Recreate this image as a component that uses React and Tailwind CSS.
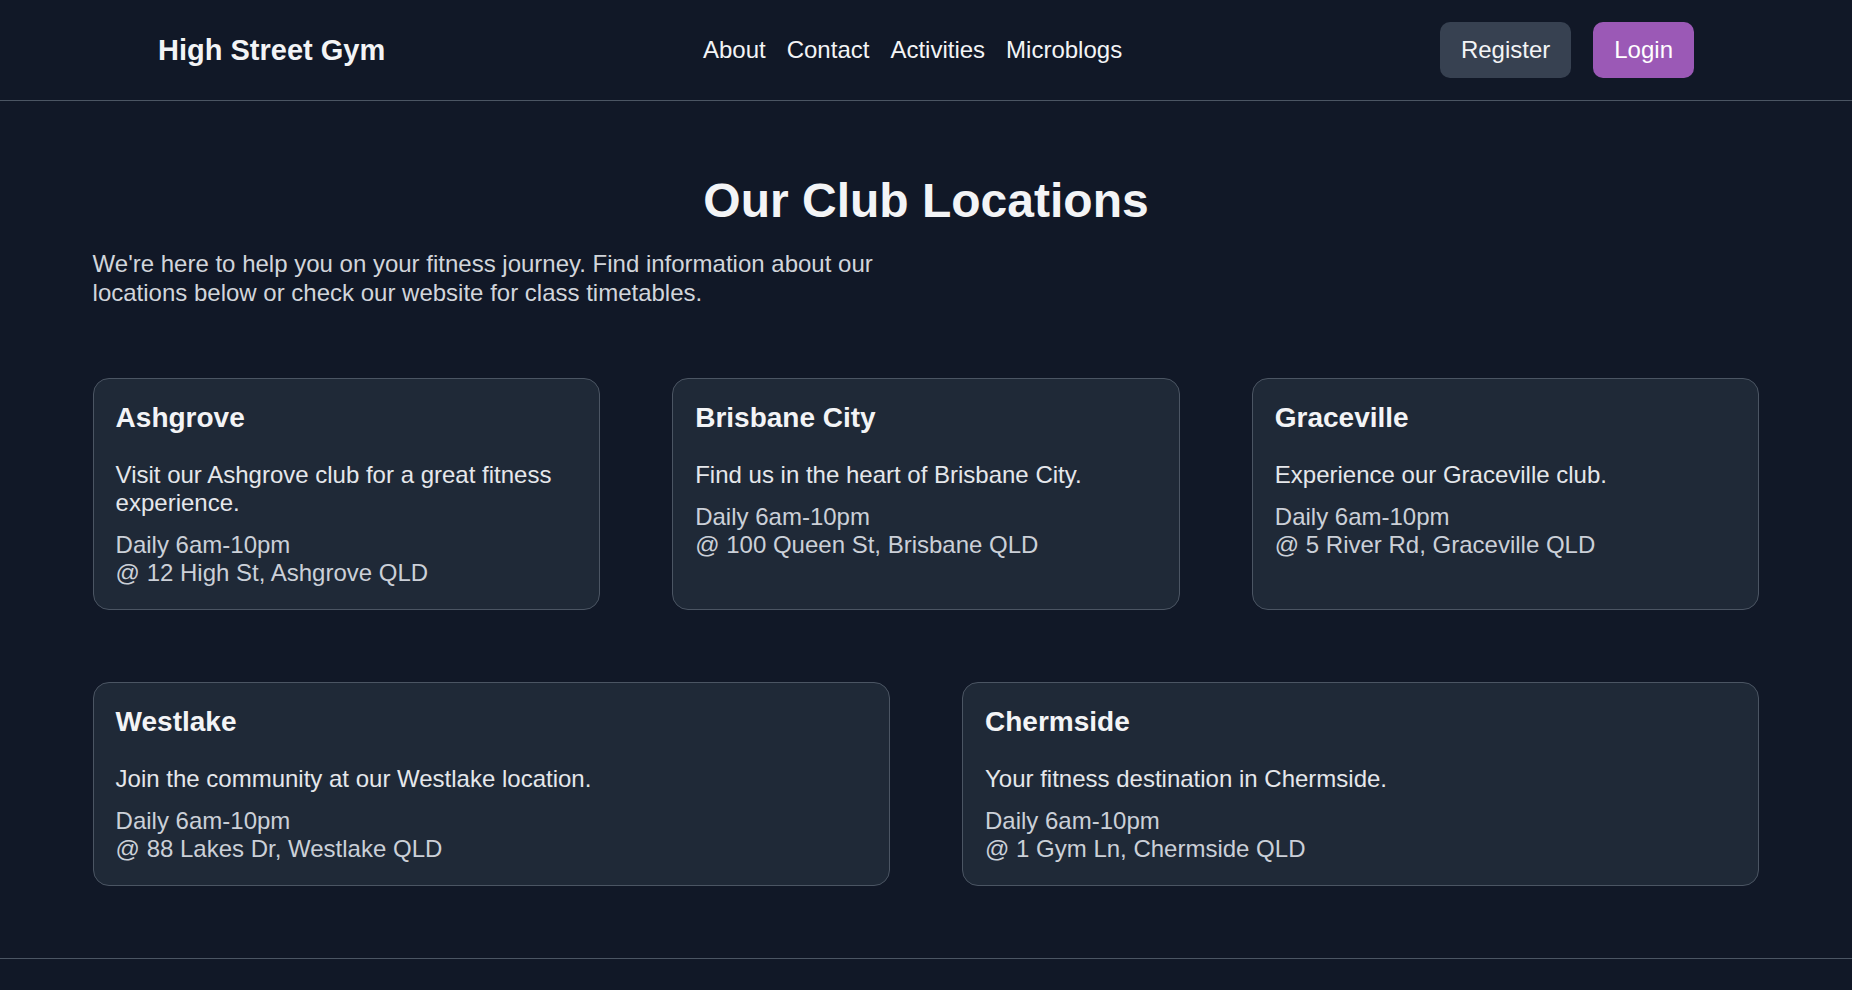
import React from 'react';

const ROW_ONE = [
  {
    name: 'Ashgrove',
    desc: 'Visit our Ashgrove club for a great fitness experience.',
    address: '@ 12 High St, Ashgrove QLD',
  },
  {
    name: 'Brisbane City',
    desc: 'Find us in the heart of Brisbane City.',
    address: '@ 100 Queen St, Brisbane QLD',
  },
  {
    name: 'Graceville',
    desc: 'Experience our Graceville club.',
    address: '@ 5 River Rd, Graceville QLD',
  },
];

const ROW_TWO = [
  {
    name: 'Westlake',
    desc: 'Join the community at our Westlake location.',
    address: '@ 88 Lakes Dr, Westlake QLD',
  },
  {
    name: 'Chermside',
    desc: 'Your fitness destination in Chermside.',
    address: '@ 1 Gym Ln, Chermside QLD',
  },
];

function LocationCard({ loc }) {
  return (
    <div className="rounded-2xl border border-[#4b5563] bg-[#1f2937] px-[22px] pt-[23px] pb-[22px]">
      <h2 className="text-[28px] leading-[32px] font-bold text-[#f3f4f6]">{loc.name}</h2>
      <p className="mt-[27px] text-[24px] leading-[28px] text-[#e5e7eb]">{loc.desc}</p>
      <p className="mt-[14px] text-[24px] leading-[28px] text-[#cbd0d8]">
        Daily 6am-10pm
        <br />
        {loc.address}
      </p>
    </div>
  );
}

export default function App() {
  return (
    <div className="min-h-screen bg-[#111827] text-white font-['Liberation_Sans',Arial,sans-serif]">
      {/* Header */}
      <header className="h-[101px] border-b border-[#4b5563]">
        <div className="mx-auto flex h-full max-w-[1536px] items-center justify-between">
          <span className="pt-[1px] text-[29px] font-bold text-[#f3f4f6]">High Street Gym</span>
          <nav className="flex items-center gap-[21px] text-[24px] text-[#f3f4f6]">
            <a href="#">About</a>
            <a href="#">Contact</a>
            <a href="#">Activities</a>
            <a href="#">Microblogs</a>
          </nav>
          <div className="flex items-center gap-[22px] text-[24px]">
            <button className="rounded-[10px] bg-[#374151] px-[21px] py-[14px] leading-[28px] text-[#f3f4f6]">
              Register
            </button>
            <button className="rounded-[10px] bg-[#9b59b6] px-[21px] py-[14px] leading-[28px] text-white">
              Login
            </button>
          </div>
        </div>
      </header>

      {/* Main */}
      <main className="px-[5%] pt-[76px] pb-[72px]">
        <h1 className="text-center text-[48px] leading-[48px] font-bold text-[#f3f4f6]">Our Club Locations</h1>
        <p className="mt-[24px] w-1/2 text-[24px] leading-[29px] text-[#d1d5db]">
          We're here to help you on your fitness journey. Find information about our locations below or check our
          website for class timetables.
        </p>

        <div className="mt-[71px] flex flex-col gap-[72px]">
          <div className="grid grid-cols-3 gap-[72px]">
            {ROW_ONE.map((loc) => (
              <LocationCard key={loc.name} loc={loc} />
            ))}
          </div>
          <div className="grid grid-cols-2 gap-[72px]">
            {ROW_TWO.map((loc) => (
              <LocationCard key={loc.name} loc={loc} />
            ))}
          </div>
        </div>
      </main>

      {/* Footer */}
      <footer className="h-[80px] border-t border-[#4b5563]" />
    </div>
  );
}
